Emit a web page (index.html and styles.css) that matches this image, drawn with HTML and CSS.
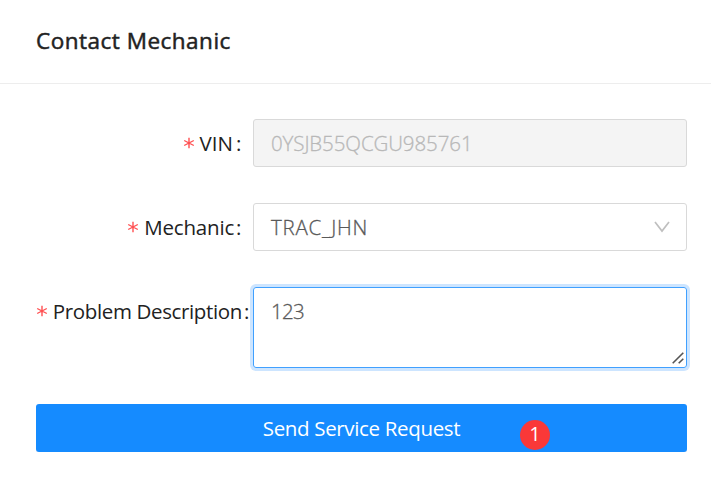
FILE: index.html
```html
<!DOCTYPE html>
<html lang="en">
<head>
<meta charset="utf-8">
<title>Contact Mechanic</title>
<link rel="stylesheet" href="styles.css">
</head>
<body>
<header class="header"><h1 class="title">Contact Mechanic</h1></header>
<main class="form">
  <div class="row">
    <div class="label"><svg class="star" viewBox="0 0 12 12"><path d="M6 .7v10.6M1.2 3.5l9.6 5M10.8 3.5l-9.6 5"/></svg><span class="name vin">VIN</span><span class="colon">:</span></div>
    <div class="field disabled"><span class="value vin-value">0YSJB55QCGU985761</span></div>
  </div>
  <div class="row">
    <div class="label"><svg class="star" viewBox="0 0 12 12"><path d="M6 .7v10.6M1.2 3.5l9.6 5M10.8 3.5l-9.6 5"/></svg><span class="name mechanic">Mechanic</span><span class="colon">:</span></div>
    <div class="field"><span class="value select-value">TRAC_JHN</span><svg class="chevron" viewBox="0 0 16 12"><path d="M1 1l7 9 7-9"/></svg></div>
  </div>
  <div class="row">
    <div class="label wide"><svg class="star" viewBox="0 0 12 12"><path d="M6 .7v10.6M1.2 3.5l9.6 5M10.8 3.5l-9.6 5"/></svg><span class="name problem">Problem Description</span><span class="colon">:</span></div>
    <div class="field area"><span class="value area-value">123</span><svg class="grip" viewBox="0 0 12 12"><path d="M.7 11.3L11.3.7M6.7 11.3l4.6-4.6"/></svg></div>
  </div>
  <div class="submit"><span class="submit-text">Send Service Request</span><span class="badge">1</span></div>
</main>
</body>
</html>
```
FILE: styles.css
```css
* { box-sizing: border-box; }
body { margin: 0; background: #fff; color: #222; font-family: "Open Sans", "Noto Sans", sans-serif; font-size: 20.5px; line-height: 30px; }
.header { height: 84px; padding: 26px 36px 0; border-bottom: 1px solid #ededed; }
.title { margin: 0; font-size: 22.5px; font-weight: 400; letter-spacing: .5px; -webkit-text-stroke: .5px currentColor; line-height: 30px; white-space: nowrap; width: max-content; }
.form { padding: 35px 24px 0 36px; }
.row { display: flex; margin-bottom: 36px; }
.label { width: 217px; height: 48px; padding-right: 12px; display: flex; align-items: center; justify-content: flex-end; flex: none; white-space: nowrap; }
.label.wide { padding-right: 4px; }
.star { width: 12px; height: 12px; margin-right: 5px; fill: none; stroke: #ff5052; stroke-width: 1.4; flex: none; }
.vin { margin-right: 1px; }
.mechanic { letter-spacing: -.2px; }
.problem { letter-spacing: -.36px; }
.colon { width: 5px; margin-left: 2px; }
.field { flex: 1; height: 48px; padding: 0 16px 0 17px; border: 1px solid #d9d9d9; border-radius: 3px; display: flex; align-items: center; justify-content: space-between; color: #595959; }
.disabled { background: #f4f4f4; color: #b8b8b8; }
.value { font-weight: 300; white-space: nowrap; -webkit-text-stroke: .3px currentColor; }
.vin-value { letter-spacing: -.1px; }
.select-value { letter-spacing: .75px; }
.area-value { letter-spacing: -.7px; }
.chevron { width: 16px; height: 12px; fill: none; stroke: #bfbfbf; stroke-width: 1.7; }
.area { height: 81px; padding: 8px 2px 3px 17px; align-items: flex-start; border-color: #40a0ff; box-shadow: 0 0 0 3px #cde5ff; }
.grip { width: 12px; height: 12px; align-self: flex-end; fill: none; stroke: #555; stroke-width: 1.6; }
.submit { position: relative; height: 48px; border-radius: 3px; background: #158bff; box-shadow: 0 3px 0 #f1f1f5; color: #fff; display: flex; align-items: center; justify-content: center; }
.submit-text { letter-spacing: -.34px; }
.badge { position: absolute; left: 484px; top: 16px; width: 30px; height: 30px; border-radius: 50%; background: #fa3838; text-align: center; font-size: 20px; line-height: 28px; }
```
